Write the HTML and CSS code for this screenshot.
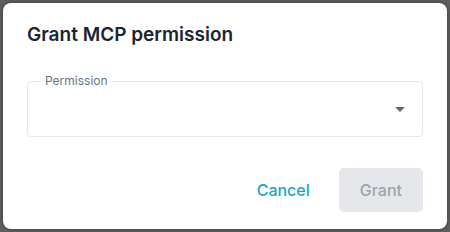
FILE: index.html
```html
<!DOCTYPE html>
<html lang="en">
<head>
  <meta charset="UTF-8">
  <title>Grant MCP permission</title>
  <link rel="stylesheet" href="styles.css">
</head>
<body>
  <div class="dialog">
    <h2 class="dialog-title">Grant MCP permission</h2>

    <fieldset class="select-field">
      <legend>Permission</legend>
      <div class="select-body">
        <span class="arrow"></span>
      </div>
    </fieldset>

    <div class="actions">
      <button class="btn btn-text">Cancel</button>
      <button class="btn btn-disabled" disabled>Grant</button>
    </div>
  </div>
</body>
</html>
```

FILE: styles.css
```css
html, body {
  margin: 0;
  height: 100%;
}

body {
  font-family: 'Inter', 'Liberation Sans', sans-serif;
  background-color: #5e5e5e;
  padding: 3px;
  box-sizing: border-box;
}

.dialog {
  background: #ffffff;
  border-radius: 8px;
  width: 444px;
  height: 226px;
  box-sizing: border-box;
  padding: 18px 24px 17px 24px;
  box-shadow: 0 0 4px rgba(0,0,0,0.35);
  display: flex;
  flex-direction: column;
}

.dialog-title {
  margin: 0;
  font-size: 19px;
  line-height: 28px;
  font-weight: 600;
  color: #1c2433;
}

.select-field {
  margin: 25px 0 0 0;
  padding: 0 12px;
  border: 1px solid #e4e6ea;
  border-radius: 4px;
  min-width: 0;
}

.select-field legend {
  padding: 0 4px;
  margin-left: 1px;
  font-size: 12px;
  line-height: 14px;
  color: #6b7280;
}

.select-body {
  height: 48px;
  display: flex;
  align-items: center;
  justify-content: flex-end;
  padding-right: 5px;
}

.arrow {
  width: 0;
  height: 0;
  border-left: 5px solid transparent;
  border-right: 5px solid transparent;
  border-top: 5px solid #646b78;
  margin-top: -5px;
}

.actions {
  margin-top: auto;
  display: flex;
  justify-content: flex-end;
  gap: 8px;
}

.btn {
  font-family: inherit;
  font-size: 16px;
  font-weight: 500;
  height: 44px;
  padding: 0 21px;
  border: none;
  border-radius: 5px;
  background: none;
  cursor: pointer;
}

.btn-text {
  color: #1aa7c1;
}

.btn-disabled {
  background-color: #e5e7eb;
  color: #9ca3af;
  cursor: default;
}
```
